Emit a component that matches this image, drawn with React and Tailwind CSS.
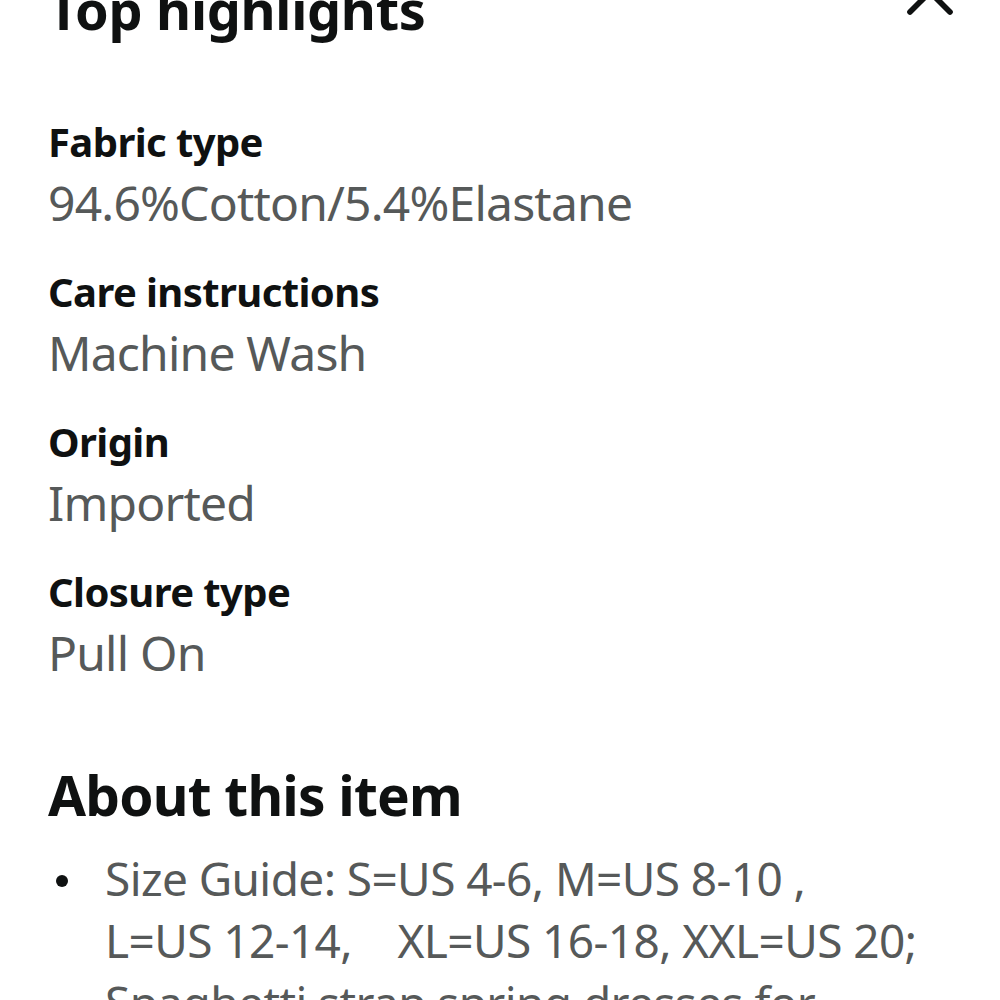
import { X } from 'lucide-react';

const highlights = [
    { label: 'Fabric type', value: '94.6%Cotton/5.4%Elastane' },
    { label: 'Care instructions', value: 'Machine Wash' },
    { label: 'Origin', value: 'Imported' },
    { label: 'Closure type', value: 'Pull On' },
];

export default function App() {
    return (
        <div
            className="min-h-screen overflow-hidden bg-white px-12 text-[#0f1111]"
            style={{ fontFamily: '"Noto Sans", Roboto, sans-serif' }}
        >
            <div className="flex items-start justify-between">
                <h2 className="mt-[-16px] text-[54px] font-bold leading-[50px] tracking-[-0.3px]">
                    Top highlights
                </h2>
                <X className="mt-[-48px] mr-[-18px] h-[80px] w-[80px] text-[#0f1111]" strokeWidth={1.7} />
            </div>

            <div className="mt-[84px] flex flex-col gap-[28px]">
                {highlights.map((item) => (
                    <div key={item.label}>
                        <div className="text-[40px] font-bold leading-[48px] tracking-[-0.6px]">
                            {item.label}
                        </div>
                        <div className="text-[48px] leading-[74px] text-[#565959] tracking-[-0.8px]">
                            {item.value}
                        </div>
                    </div>
                ))}
            </div>

            <h2 className="mt-[70px] text-[55px] font-bold leading-[70px] tracking-[-0.8px]">
                About this item
            </h2>

            <ul className="mt-[17px]">
                <li className="flex">
                    <span className="mt-[28px] ml-[8px] h-[12px] w-[12px] shrink-0 rounded-full bg-[#0f1111]" />
                    <span className="ml-[37px] text-[46px] leading-[62px] text-[#565959] tracking-[-0.6px]">
                        Size Guide: S=US 4-6, M=US 8-10 ,<br />
                        L=US 12-14,&nbsp;&nbsp;&nbsp; XL=US 16-18, XXL=US 20;<br />
                        Spaghetti strap spring dresses for women
                    </span>
                </li>
            </ul>
        </div>
    );
}
